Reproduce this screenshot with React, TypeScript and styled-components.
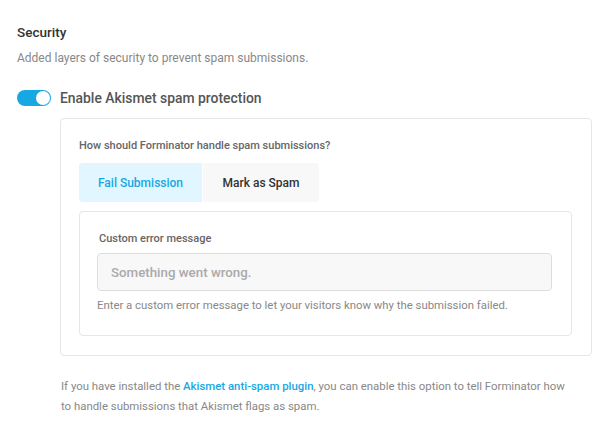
import React from "react";
import styled, { createGlobalStyle } from "styled-components";

const Global = createGlobalStyle`
  html, body { margin: 0; padding: 0; background: #fff; }
  body { font-family: Roboto, "Liberation Sans", Arial, sans-serif; -webkit-font-smoothing: antialiased; }
  * { box-sizing: border-box; }
`;

const Page = styled.div`
  padding: 21px 18px 20px 17px;
  width: 610px;
`;

const Title = styled.h3`
  margin: 0 0 4px;
  font-size: 13.5px;
  line-height: 22px;
  font-weight: 500;
  color: #333;
`;

const Desc = styled.p`
  margin: 0;
  font-size: 12px;
  line-height: 22px;
  color: #888;
`;

const ToggleRow = styled.label`
  display: flex;
  align-items: center;
  gap: 9px;
  margin-top: 18px;
  height: 22px;
`;

const Toggle = styled.span<{ $on: boolean }>`
  position: relative;
  display: inline-block;
  width: 34px;
  height: 16px;
  border-radius: 100px;
  background: ${(p) => (p.$on ? "#17a8e3" : "#f8f8f8")};
  flex-shrink: 0;
  &::after {
    content: "";
    position: absolute;
    top: 1px;
    left: ${(p) => (p.$on ? "19px" : "1px")};
    width: 14px;
    height: 14px;
    border-radius: 50%;
    background: #fff;
  }
`;

const ToggleLabel = styled.span`
  font-size: 13.9px;
  line-height: 22px;
  font-weight: 500;
  color: #555;
`;

const Indent = styled.div`
  margin-left: 43px;
`;

const Box = styled.div`
  margin-top: 9px;
  border: 1px solid #e6e6e6;
  border-radius: 4px;
  padding: 19px 19px 19px 18px;
`;

const Label = styled.div`
  font-size: 11px;
  line-height: 16px;
  font-weight: 500;
  color: #666;
`;

const Tabs = styled.div`
  display: flex;
  margin-top: 9px;
`;

const Tab = styled.button<{ $active: boolean; $pos: "first" | "last" }>`
  display: flex;
  align-items: center;
  justify-content: center;
  height: 39px;
  border: none;
  margin: 0;
  padding: 0;
  white-space: nowrap;
  font-family: inherit;
  font-size: 12px;
  font-weight: 500;
  background: ${(p) => (p.$active ? "#e1f6ff" : "#f8f8f8")};
  color: ${(p) => (p.$active ? "#17a8e3" : "#333")};
  border-radius: ${(p) => (p.$pos === "first" ? "4px 0 0 4px" : "0 4px 4px 0")};
  ${(p) => (p.$pos === "first" ? "border-right: 1px solid #fff; width: 124px;" : "width: 116px;")}
`;

const Panel = styled.div`
  margin-top: 9px;
  border: 1px solid #e6e6e6;
  border-radius: 4px;
  padding: 19px 19px 19px 17px;
`;

const PanelLabel = styled(Label)`
  padding-left: 2px;
`;

const Input = styled.input`
  display: block;
  width: 100%;
  height: 38px;
  margin-top: 6px;
  padding: 0 13px;
  border: 1px solid #ddd;
  border-radius: 4px;
  background: #f8f8f8;
  font-family: inherit;
  font-size: 13.3px;
  font-weight: 500;
  color: #333;
  &::placeholder { color: #aaa; }
  outline: none;
`;

const Help = styled.p`
  margin: 3px 0 0;
  font-size: 11.35px;
  line-height: 22px;
  color: #888;
`;

const Note = styled.p`
  margin: 20px 0 0 1px;
  padding-right: 22px;
  font-size: 11.4px;
  line-height: 20px;
  color: #888;
`;

const Link = styled.a`
  color: #17a8e3;
  font-weight: 500;
  text-decoration: none;
`;

export default function App() {
  return (
    <>
      <Global />
      <Page>
        <Title>Security</Title>
        <Desc>Added layers of security to prevent spam submissions.</Desc>
        <ToggleRow>
          <Toggle $on={true} />
          <ToggleLabel>Enable Akismet spam protection</ToggleLabel>
        </ToggleRow>
        <Indent>
          <Box>
            <Label>How should Forminator handle spam submissions?</Label>
            <Tabs>
              <Tab $active={true} $pos="first">Fail Submission</Tab>
              <Tab $active={false} $pos="last">Mark as Spam</Tab>
            </Tabs>
            <Panel>
              <PanelLabel>Custom error message</PanelLabel>
              <Input placeholder="Something went wrong." />
              <Help>Enter a custom error message to let your visitors know why the submission failed.</Help>
            </Panel>
          </Box>
          <Note>
            If you have installed the <Link href="#">Akismet anti-spam plugin</Link>, you can enable this option to tell Forminator how to handle submissions that Akismet flags as spam.
          </Note>
        </Indent>
      </Page>
    </>
  );
}
